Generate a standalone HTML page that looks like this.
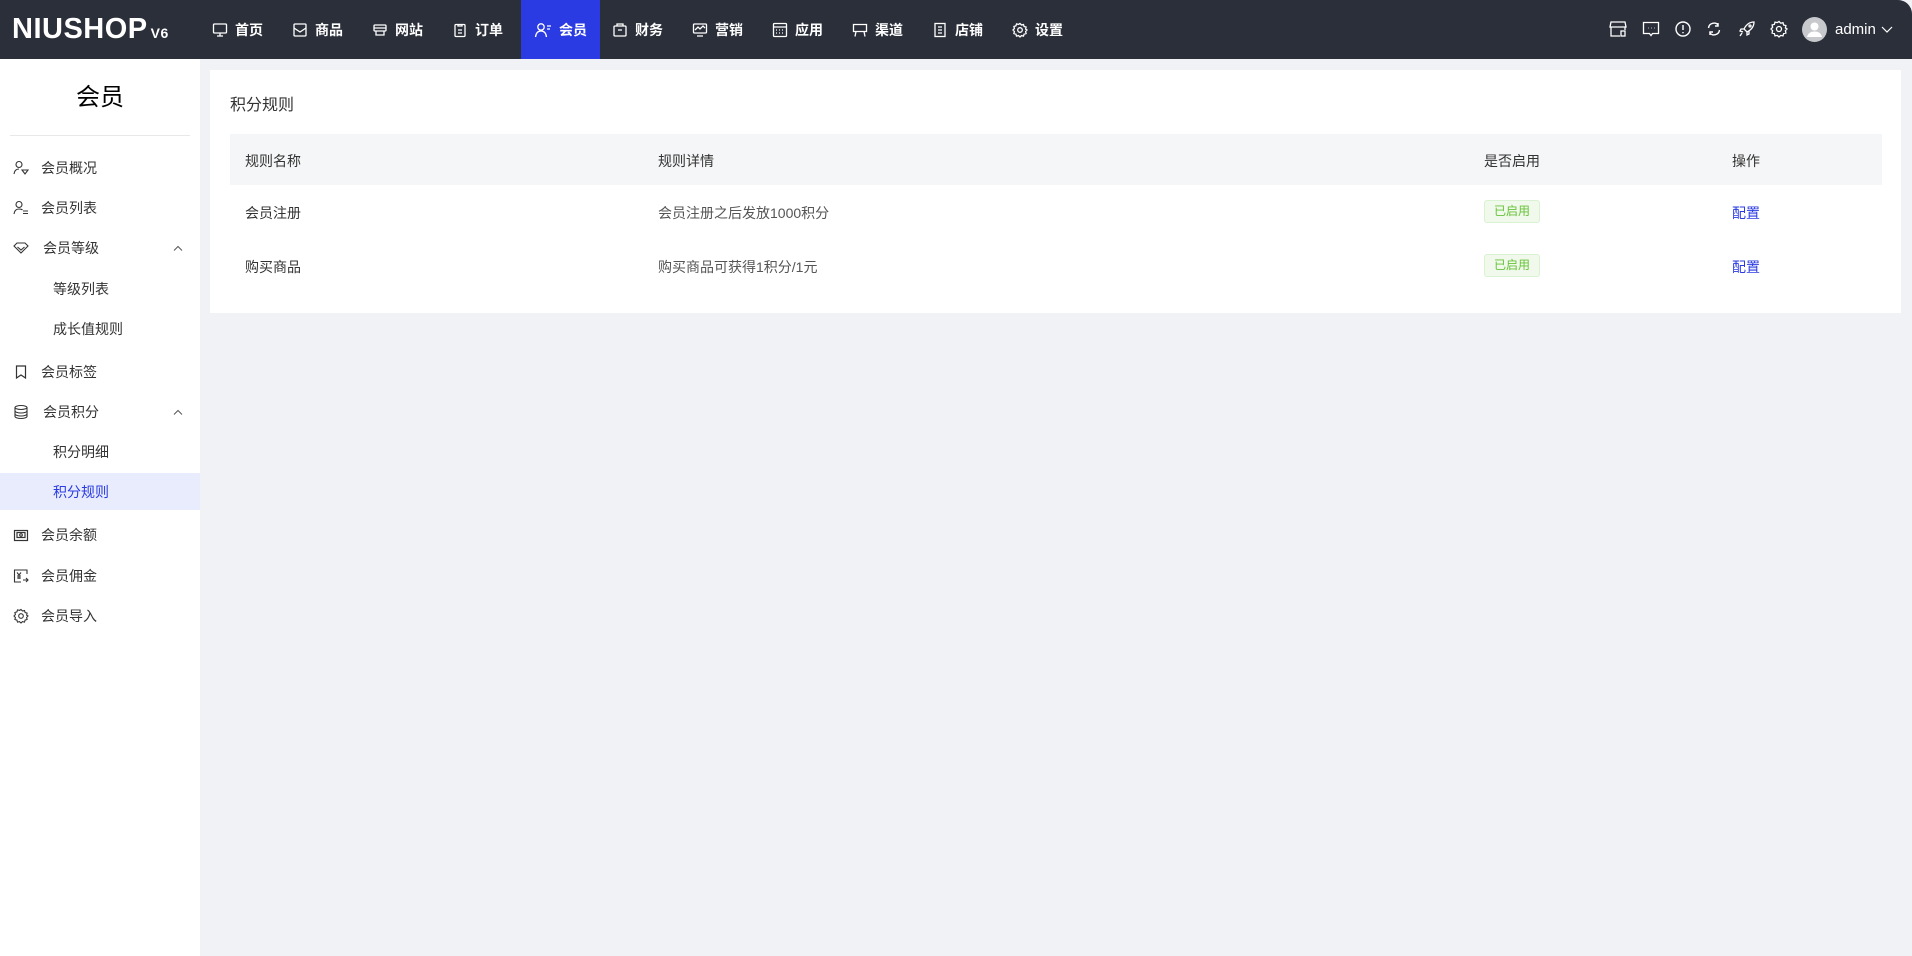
<!DOCTYPE html>
<html><head><meta charset="utf-8"><style>
*{margin:0;padding:0;box-sizing:border-box}
body{width:1912px;height:956px;background:#f0f2f5;font-family:"Liberation Sans","Noto Sans CJK SC",sans-serif;color:#333;position:relative;overflow:hidden}
.top{position:absolute;left:0;top:0;width:1912px;height:59px;background:#2b2f3a;border-top-right-radius:14px}
.logo{position:absolute;left:12px;top:13px;color:#fff;font-size:29px;font-weight:700;letter-spacing:0.5px;font-family:"Liberation Sans",sans-serif}
.logo small{font-size:14px;font-weight:700;margin-left:3px}
.nav{position:absolute;top:0;height:59px;display:flex;align-items:center;color:#fff;font-size:14px;font-weight:700}
.nav svg{margin-right:7px}
.act{background:#2b3be3}
.ic{position:absolute;top:20px}
.side{position:absolute;left:0;top:59px;width:200px;height:897px;background:#fff}
.side h1{position:absolute;left:0;width:200px;top:18px;text-align:center;font-size:24px;font-weight:400;color:#000}
.div{position:absolute;left:10px;width:180px;top:76px;border-top:1px solid #e8e8e8}
.mi{position:absolute;left:0;width:200px;height:38px;display:flex;align-items:center;font-size:14px;color:#333}
.mi svg{position:absolute;left:13px}
.mi span{position:absolute;left:41px}
.mi.sub span{left:53px}
.mi.on{background:#e8ecfd;color:#2b3be3}
.car{position:absolute;left:172px;}
.card{position:absolute;left:210px;top:70px;width:1691px;height:243px;background:#fff}
.ttl{position:absolute;left:20px;top:21px;font-size:16px;color:#333}
.th{position:absolute;left:20px;top:64px;width:1652px;height:51px;background:#f5f6f7}
.c{position:absolute;font-size:14px;color:#333}
.badge{position:absolute;width:56px;height:23px;border:1px solid #d9f2d2;background:#f0f9eb;border-radius:3px;color:#67c23a;font-size:12px;text-align:center;line-height:21px}
.lk{color:#2b3be3}
</style></head><body>
<div class="top">
<div class="logo">NIUSHOP<small>V6</small></div>
<div class="nav" style="left:212px"><svg width="16" height="16" viewBox="0 0 16 16" fill="none" stroke="#fff" stroke-width="1.3"><rect x="1.5" y="2" width="13" height="9" rx="1"/><path d="M8 11v3M5 14h6"/></svg>首页</div>
<div class="nav" style="left:292px"><svg width="16" height="16" viewBox="0 0 16 16" fill="none" stroke="#fff" stroke-width="1.3"><rect x="2" y="2" width="12" height="12" rx="1"/><path d="M2 6l6 4 6-4"/></svg>商品</div>
<div class="nav" style="left:372px"><svg width="16" height="16" viewBox="0 0 16 16" fill="none" stroke="#fff" stroke-width="1.3"><rect x="2" y="3" width="12" height="6" rx="1"/><path d="M4 9v4h8V9M2 6h12"/></svg>网站</div>
<div class="nav" style="left:452px"><svg width="16" height="16" viewBox="0 0 16 16" fill="none" stroke="#fff" stroke-width="1.3"><rect x="3" y="2.5" width="10" height="12" rx="1"/><path d="M6 2v2h4V2M6 8h4M6 11h4"/></svg>订单</div>
<div class="nav act" style="left:521px;width:79px;justify-content:center"><svg width="18" height="16" viewBox="0 0 18 16" fill="none" stroke="#fff" stroke-width="1.3"><circle cx="7" cy="5" r="3.2"/><path d="M1.5 15c.5-4 2.5-6 5.5-6s5 2 5.5 6M13 4h4M13 7h3"/></svg>会员</div>
<div class="nav" style="left:612px"><svg width="16" height="16" viewBox="0 0 16 16" fill="none" stroke="#fff" stroke-width="1.3"><rect x="2" y="4" width="12" height="10" rx="1"/><path d="M5 4V2h6v2M6 8h4"/></svg>财务</div>
<div class="nav" style="left:692px"><svg width="16" height="16" viewBox="0 0 16 16" fill="none" stroke="#fff" stroke-width="1.3"><rect x="1.5" y="2" width="13" height="9" rx="1"/><path d="M3 8l3-3 2 2 3-3 2 2M5 14h6"/></svg>营销</div>
<div class="nav" style="left:772px"><svg width="16" height="16" viewBox="0 0 16 16" fill="none" stroke="#fff" stroke-width="1.3"><rect x="1.5" y="1.5" width="13" height="13" rx="1"/><path d="M1.5 5h13M4 8h1M7 8h1M10 8h1M4 11h1M7 11h1M10 11h1"/></svg>应用</div>
<div class="nav" style="left:852px"><svg width="16" height="16" viewBox="0 0 16 16" fill="none" stroke="#fff" stroke-width="1.3"><path d="M1.5 2.5h13v7h-13zM4 9.5l-1 5M12 9.5l1 5"/></svg>渠道</div>
<div class="nav" style="left:932px"><svg width="16" height="16" viewBox="0 0 16 16" fill="none" stroke="#fff" stroke-width="1.3"><rect x="3" y="1.5" width="10" height="13"/><path d="M6 5h4M6 8h4M6 11h4"/></svg>店铺</div>
<div class="nav" style="left:1012px"><svg width="16" height="16" viewBox="0 0 16 16" fill="none" stroke="#fff" stroke-width="1.3"><circle cx="8" cy="8" r="2.3"/><path d="M8 1.5l1.5 1.5 2-.5.6 2 2 .6-.5 2L15 8l-1.4 1.5.5 2-2 .6-.6 2-2-.5L8 15l-1.5-1.4-2 .5-.6-2-2-.6.5-2L1 8l1.4-1.5-.5-2 2-.6.6-2 2 .5z"/></svg>设置</div>

<svg class="ic" style="left:1609px" width="18" height="18" viewBox="0 0 18 18" fill="none" stroke="#fff" stroke-width="1.3"><path d="M2 2h14l1 5H1zM2 7v9h9M16 7v3"/><rect x="12" y="11" width="4" height="5"/></svg>
<svg class="ic" style="left:1642px" width="18" height="18" viewBox="0 0 18 18" fill="none" stroke="#fff" stroke-width="1.3"><path d="M1.5 2.5h15v11h-6l-1.5 2-1.5-2h-6z"/><path d="M6 8h.5M9 8h.5M12 8h.5"/></svg>
<svg class="ic" style="left:1674px" width="18" height="18" viewBox="0 0 18 18" fill="none" stroke="#fff" stroke-width="1.4"><circle cx="9" cy="9" r="7"/><path d="M9 5v5M9 12v1.3"/></svg>
<svg class="ic" style="left:1705px" width="18" height="18" viewBox="0 0 18 18" fill="none" stroke="#fff" stroke-width="1.4"><path d="M3.5 8a5.5 5.5 0 0 1 10-2.5M14.5 10a5.5 5.5 0 0 1-10 2.5M13 3v3h-3M5 15v-3h3"/></svg>
<svg class="ic" style="left:1738px" width="18" height="18" viewBox="0 0 18 18" fill="none" stroke="#fff" stroke-width="1.3"><path d="M16 2c-5 0-8 3-10 7l3 3c4-2 7-5 7-10zM6 9l-3 0-1 2 3 1M9 12v3l2-1 0-3M4 13l-2 3"/><circle cx="12" cy="6" r="1"/></svg>
<svg class="ic" style="left:1770px" width="18" height="18" viewBox="0 0 18 18" fill="none" stroke="#fff" stroke-width="1.3"><circle cx="9" cy="9" r="2.5"/><path d="M9 1.5l1.7 1.7 2.3-.5.6 2.3 2.3.6-.5 2.3L17 9l-1.6 1.7.5 2.3-2.3.6-.6 2.3-2.3-.5L9 17l-1.7-1.6-2.3.5-.6-2.3-2.3-.6.5-2.3L1 9l1.6-1.7-.5-2.3 2.3-.6.6-2.3 2.3.5z"/></svg>
<svg style="position:absolute;left:1802px;top:17px" width="25" height="25" viewBox="0 0 25 25"><circle cx="12.5" cy="12.5" r="12.5" fill="#c8c9cc"/><circle cx="12.5" cy="9.5" r="4" fill="#fff"/><path d="M5 20c1-4 4-5.5 7.5-5.5S19 16 20 20z" fill="#fff"/></svg>
<div style="position:absolute;left:1835px;top:21px;color:#fff;font-size:15px">admin</div>
<svg style="position:absolute;left:1881px;top:26px" width="12" height="8" viewBox="0 0 12 8" fill="none" stroke="#fff" stroke-width="1.2"><path d="M1 1l5 5 5-5"/></svg>
</div>

<div class="side">
<h1>会员</h1>
<div class="div"></div>
<div class="mi" style="top:90px"><svg width="16" height="16" viewBox="0 0 16 16" fill="none" stroke="#333" stroke-width="1.1"><circle cx="6" cy="4.5" r="3"/><path d="M1 14c.5-3.5 2.5-5 5-5M9 10h6l-3 4z"/></svg><span>会员概况</span></div>
<div class="mi" style="top:130px"><svg width="16" height="16" viewBox="0 0 16 16" fill="none" stroke="#333" stroke-width="1.1"><circle cx="6" cy="4.5" r="3"/><path d="M1 14c.5-3.5 2.5-5 5-5s3 .5 3.5 1M10 11h5M10 13.5h5"/></svg><span>会员列表</span></div>
<div class="mi" style="top:170px"><svg width="16" height="16" viewBox="0 0 16 16" fill="none" stroke="#333" stroke-width="1.1"><path d="M1 6l3-3h8l3 3-7 7z"/><path d="M4.5 7l3.5 3 3.5-3"/></svg><span style="left:43px">会员等级</span><svg class="car" style="left:173px" width="10" height="7" viewBox="0 0 10 7" fill="none" stroke="#555"><path d="M1 5.5l4-4 4 4"/></svg></div>
<div class="mi sub" style="top:211px"><span>等级列表</span></div>
<div class="mi sub" style="top:251px"><span>成长值规则</span></div>
<div class="mi" style="top:294px"><svg width="16" height="16" viewBox="0 0 16 16" fill="none" stroke="#333" stroke-width="1.2"><path d="M3.5 2h9v12L8 11l-4.5 3z"/></svg><span>会员标签</span></div>
<div class="mi" style="top:334px"><svg width="16" height="16" viewBox="0 0 16 16" fill="none" stroke="#333" stroke-width="1.1"><ellipse cx="8" cy="3.5" rx="6" ry="2"/><path d="M2 3.5v9c0 1 2.7 2 6 2s6-1 6-2v-9M2 7c0 1 2.7 2 6 2s6-1 6-2M2 10c0 1 2.7 2 6 2s6-1 6-2"/></svg><span style="left:43px">会员积分</span><svg class="car" style="left:173px" width="10" height="7" viewBox="0 0 10 7" fill="none" stroke="#555"><path d="M1 5.5l4-4 4 4"/></svg></div>
<div class="mi sub" style="top:374px"><span>积分明细</span></div>
<div class="mi sub on" style="top:414px;height:37px"><span>积分规则</span></div>
<div class="mi" style="top:457px"><svg width="16" height="16" viewBox="0 0 16 16" fill="none" stroke="#333" stroke-width="1.2"><rect x="1.5" y="3.5" width="13" height="10"/><rect x="4" y="5.5" width="8" height="5"/><circle cx="8" cy="8" r="1.3"/></svg><span>会员余额</span></div>
<div class="mi" style="top:498px"><svg width="16" height="16" viewBox="0 0 16 16" fill="none" stroke="#333" stroke-width="1.1"><path d="M14 6V2H1.5v12H8"/><path d="M4 4.5l2 2.5 2-2.5M6 7v4M4 8h4M4 10h4M10 12h5M13 10l2 2-2 2"/></svg><span>会员佣金</span></div>
<div class="mi" style="top:538px"><svg width="16" height="16" viewBox="0 0 16 16" fill="none" stroke="#333" stroke-width="1.1"><circle cx="8" cy="8" r="2.3"/><path d="M8 1.5l1.5 1.5 2-.5.6 2 2 .6-.5 2L15 8l-1.4 1.5.5 2-2 .6-.6 2-2-.5L8 15l-1.5-1.4-2 .5-.6-2-2-.6.5-2L1 8l1.4-1.5-.5-2 2-.6.6-2 2 .5z"/></svg><span>会员导入</span></div>
</div>

<div class="card">
<div class="ttl">积分规则</div>
<div class="th"></div>
<div class="c" style="left:35px;top:81px">规则名称</div>
<div class="c" style="left:448px;top:81px">规则详情</div>
<div class="c" style="left:1274px;top:81px">是否启用</div>
<div class="c" style="left:1522px;top:81px">操作</div>
<div class="c" style="left:35px;top:133px">会员注册</div>
<div class="c" style="left:448px;top:133px;color:#555">会员注册之后发放1000积分</div>
<div class="badge" style="left:1274px;top:130px">已启用</div>
<div class="c lk" style="left:1522px;top:133px">配置</div>
<div class="c" style="left:35px;top:187px">购买商品</div>
<div class="c" style="left:448px;top:187px;color:#555">购买商品可获得1积分/1元</div>
<div class="badge" style="left:1274px;top:184px">已启用</div>
<div class="c lk" style="left:1522px;top:187px">配置</div>
</div>
</body></html>
